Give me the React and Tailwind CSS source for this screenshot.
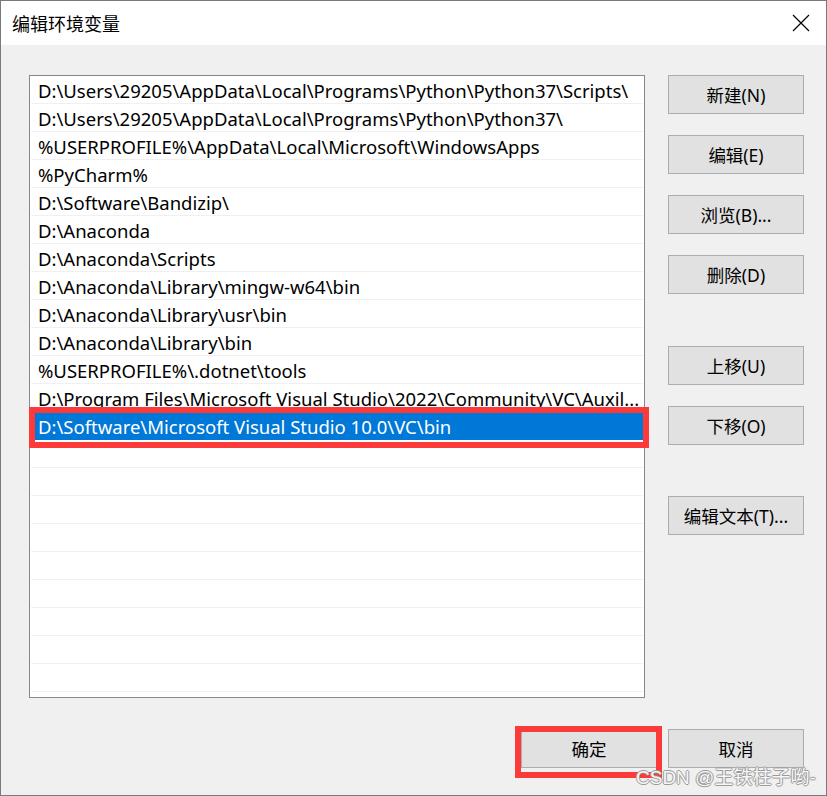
import React from "react";

const rows = [
  "D:\\Users\\29205\\AppData\\Local\\Programs\\Python\\Python37\\Scripts\\",
  "D:\\Users\\29205\\AppData\\Local\\Programs\\Python\\Python37\\",
  "%USERPROFILE%\\AppData\\Local\\Microsoft\\WindowsApps",
  "%PyCharm%",
  "D:\\Software\\Bandizip\\",
  "D:\\Anaconda",
  "D:\\Anaconda\\Scripts",
  "D:\\Anaconda\\Library\\mingw-w64\\bin",
  "D:\\Anaconda\\Library\\usr\\bin",
  "D:\\Anaconda\\Library\\bin",
  "%USERPROFILE%\\.dotnet\\tools",
  "D:\\Program Files\\Microsoft Visual Studio\\2022\\Community\\VC\\Auxil...",
  "D:\\Software\\Microsoft Visual Studio 10.0\\VC\\bin",
  "", "", "", "", "", "", "", "", "",
];

const font = { fontFamily: '"Noto Sans", "Noto Sans CJK SC", sans-serif' };

function Btn({ children, className = "" }) {
  return (
    <div
      className={
        "w-[136px] h-[39px] bg-[#e1e1e1] border border-[#adadad] flex items-center justify-center pt-[1px] text-[17.5px] text-black " +
        className
      }
      style={font}
    >
      {children}
    </div>
  );
}

export default function App() {
  return (
    <div
      className="relative w-[827px] h-[796px] border border-[#7a7a7a] bg-[#f0f0f0] flex flex-col overflow-hidden"
      style={font}
    >
      <div className="h-[44px] bg-white flex items-center justify-between pl-[11px] pr-[16px] shrink-0">
        <span className="text-[18px] text-black" style={{ fontFamily: '"Noto Sans CJK SC", sans-serif' }}>编辑环境变量</span>
        <svg width="18" height="18" viewBox="0 0 18 18">
          <path d="M1 1L17 17M17 1L1 17" stroke="#000" strokeWidth="1.2" />
        </svg>
      </div>
      <div className="flex pl-[28px] pt-[30px]">
        <div className="w-[616px] h-[623px] bg-white border border-[#828790] px-[1px] overflow-hidden">
          {rows.map((r, i) => {
            const sel = i === 12;
            return (
              <div
                key={i}
                className={
                  "h-[28px] border-b flex items-center pl-[7px] pt-[3px] text-[18.5px] whitespace-nowrap leading-none " +
                  (sel ? "bg-[#0078d7] border-[#0078d7] text-white" : "border-[#f0f0f0] text-black")
                }
              >
                {r}
              </div>
            );
          })}
        </div>
        <div className="ml-[23px] flex flex-col">
          <Btn>新建(N)</Btn>
          <Btn className="mt-[21px]">编辑(E)</Btn>
          <Btn className="mt-[21px]">浏览(B)...</Btn>
          <Btn className="mt-[21px]">删除(D)</Btn>
          <Btn className="mt-[52px]">上移(U)</Btn>
          <Btn className="mt-[21px]">下移(O)</Btn>
          <Btn className="mt-[51px]">编辑文本(T)...</Btn>
        </div>
      </div>
      <div className="flex justify-end gap-[11px] pr-[22px] mt-[31px]">
        <Btn>确定</Btn>
        <Btn>取消</Btn>
      </div>
      <div className="absolute left-[28px] top-[406px] w-[620px] h-[41px] border-[6px] border-[#fc3a3a]" />
      <div className="absolute left-[514px] top-[725px] w-[147px] h-[52px] border-[6px] border-[#fc3a3a]" />
      <div
        className="absolute left-[635px] top-[763px] text-[19px] text-[#f7f7f7] whitespace-nowrap"
        style={{
          fontFamily: '"Liberation Sans", "Noto Sans CJK SC", sans-serif',
          textShadow: "1px 0 0 #9a9a9a, -1px 0 0 #9a9a9a, 0 1px 0 #9a9a9a, 0 -1px 0 #9a9a9a",
        }}
      >
        CSDN @王铁柱子哟-
      </div>
    </div>
  );
}
